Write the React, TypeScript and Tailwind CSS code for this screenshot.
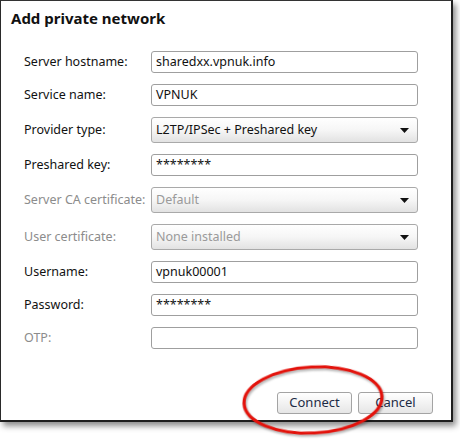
import { ReactNode } from "react";

type Row = {
  label: string;
  kind: "text" | "select";
  value?: string;
  disabled?: boolean;
};

const rows: Row[] = [
  { label: "Server hostname:", kind: "text", value: "sharedxx.vpnuk.info" },
  { label: "Service name:", kind: "text", value: "VPNUK" },
  { label: "Provider type:", kind: "select", value: "L2TP/IPSec + Preshared key" },
  { label: "Preshared key:", kind: "text", value: "********" },
  { label: "Server CA certificate:", kind: "select", value: "Default", disabled: true },
  { label: "User certificate:", kind: "select", value: "None installed", disabled: true },
  { label: "Username:", kind: "text", value: "vpnuk00001" },
  { label: "Password:", kind: "text", value: "********" },
  { label: "OTP:", kind: "text", value: "", disabled: true },
];

const Arrow = () => (
  <svg width="9" height="5" viewBox="0 0 9 5" className="ml-auto">
    <path d="M0 0h9L4.5 5z" fill="#111" />
  </svg>
);

const Field = ({ row }: { row: Row }): ReactNode => {
  if (row.kind === "select") {
    return (
      <div className="flex h-[26px] items-center rounded-[3px] border border-[#a9a9a9] bg-gradient-to-b from-white via-[#f6f6f6] to-[#e2e2e2] pl-[4px] pr-[8px]">
        <span className={row.disabled ? "text-[#9a9a9a]" : "text-[#111]"}>{row.value}</span>
        <Arrow />
      </div>
    );
  }
  return (
    <div className="flex h-[22px] items-center rounded-[3px] border border-[#9f9f9f] bg-white pl-[4px] text-[#111]">
      {row.value}
    </div>
  );
};

const App = () => {
  return (
    <div className="relative h-[444px] w-[460px] overflow-hidden bg-white font-['Noto_Sans','Open_Sans',sans-serif] text-[12.5px]">
      <div className="h-[422px] w-[453px] border-t border-l border-r-2 border-b-2 border-t-[#333] border-l-[#2a2a2a] border-r-[#1e1e1e] border-b-[#1e1e1e] bg-white shadow-[3px_4px_6px_rgba(0,0,0,0.45)]">
        <h1 className="pl-[10px] pt-[6px] text-[15px] font-bold leading-[22px] text-[#111]">
          Add private network
        </h1>
        <div className="mt-[22px] grid grid-cols-[127px_267px] gap-y-[11px] pl-[23px]">
          {rows.map((row) => (
            <div key={row.label} className="contents">
              <div className={"flex items-center " + (row.disabled ? "text-[#8c8c8c]" : "text-[#111]")}>
                {row.label}
              </div>
              <Field row={row} />
            </div>
          ))}
        </div>
        <div className="mt-[43px] flex justify-end gap-[6px] pr-[18px]">
          <button className="h-[22px] w-[75px] rounded-[3px] border border-[#a4a4a4] bg-gradient-to-b from-white to-[#e6e6e6] text-[13px] text-[#1d2b45]">
            Connect
          </button>
          <button className="h-[22px] w-[75px] rounded-[3px] border border-[#a4a4a4] bg-gradient-to-b from-white to-[#e6e6e6] text-[13px] text-[#1d2b45]">
            Cancel
          </button>
        </div>
      </div>
      <svg className="pointer-events-none absolute left-0 top-0" width="460" height="444">
        <ellipse
          cx="313"
          cy="400"
          rx="69"
          ry="33"
          transform="rotate(-3 313 400)"
          fill="none"
          stroke="#e3120b"
          strokeWidth="3.2"
          style={{ filter: "drop-shadow(1px 2px 1px rgba(0,0,0,0.3))" }}
        />
      </svg>
    </div>
  );
};

export default App;
